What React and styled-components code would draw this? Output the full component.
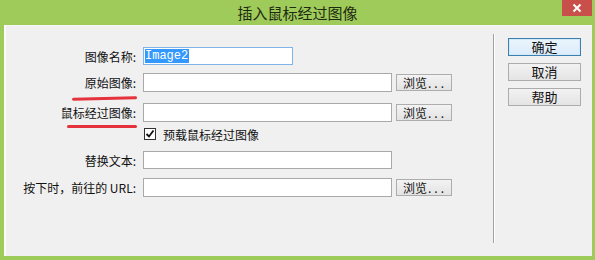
import React from "react";
import styled, { createGlobalStyle } from "styled-components";

const GlobalStyle = createGlobalStyle`
  html, body {
    margin: 0;
    padding: 0;
    background: #9fcb5b;
  }
  body {
    font-family: "Noto Sans CJK SC", "Liberation Sans", sans-serif;
    font-size: 12px;
    color: #111;
  }
`;

const Window = styled.div`
  width: 595px;
  height: 260px;
  background: #9fcb5b;
  display: flex;
  flex-direction: column;
  box-sizing: border-box;
`;

const TitleBar = styled.div`
  height: 25px;
  display: grid;
  grid-template-columns: 1fr auto 1fr;
  align-items: center;
`;

const Title = styled.div`
  grid-column: 2;
  font-size: 15px;
  color: #1e2a12;
  line-height: 25px;
`;

const CloseButton = styled.div`
  grid-column: 3;
  justify-self: end;
  align-self: start;
  width: 30px;
  height: 16px;
  margin-right: 3px;
  background: #c9504a;
  display: flex;
  align-items: center;
  justify-content: center;
`;

const Body = styled.div`
  flex: 1;
  margin: 0 3px 4px 4px;
  background: #f0f0f0;
  border-top: 1px solid #f7f7f7;
  border-left: 2px solid #fafafa;
  display: flex;
  box-sizing: border-box;
`;

const Form = styled.div`
  width: 446px;
  display: flex;
  flex-direction: column;
  padding-top: 21px;
`;

const Row = styled.div`
  display: flex;
  align-items: center;
  height: ${(p) => p.$h || 19}px;
  margin-top: ${(p) => p.$mt || 0}px;
`;

const Label = styled.div`
  position: relative;
  width: 130px;
  text-align: right;
  white-space: nowrap;
  line-height: 19px;
  &::after {
    content: "";
    display: ${(p) => (p.$mark ? "block" : "none")};
    position: absolute;
    right: -1px;
    bottom: ${(p) => p.$markBottom || -7}px;
    width: ${(p) => p.$mark || 0}px;
    height: 3px;
    border-radius: 2px;
    background: #e5333d;
    transform: rotate(${(p) => p.$tilt || 0}deg);
  }
`;

const Field = styled.div`
  box-sizing: border-box;
  width: ${(p) => p.$w || 249}px;
  height: 100%;
  margin-left: 7px;
  background: #fff;
  border: 1px solid ${(p) => (p.$focus ? "#7eb4ea" : "#a9a9a9")};
  display: flex;
  align-items: center;
  padding-left: 1px;
`;

const Selected = styled.span`
  font-family: "Liberation Mono", monospace;
  font-size: 12px;
  line-height: 14px;
  background: #3399ff;
  color: #fff;
  padding: 0 1px 0 0;
`;

const Browse = styled.div`
  box-sizing: border-box;
  width: 56px;
  height: 17px;
  margin-left: 4px;
  border: 1px solid #adadad;
  background: linear-gradient(#f3f3f3, #e3e3e3);
  font-size: 12px;
  line-height: 15px;
  padding-left: 6px;
  white-space: nowrap;
  span {
    letter-spacing: 3px;
    margin-left: 1px;
  }
`;

const CheckRow = styled.div`
  display: flex;
  align-items: center;
  height: 14px;
  margin-top: 5px;
  margin-left: 138px;
  gap: 7px;
`;

const CheckBox = styled.div`
  box-sizing: border-box;
  width: 12px;
  height: 12px;
  background: #fff;
  border: 1px solid #333;
  display: flex;
  align-items: center;
  justify-content: center;
`;

const Separator = styled.div`
  width: 0;
  margin: 8px 0 13px 41px;
  border-left: 1px solid #a0a0a0;
  border-right: 1px solid #fff;
`;

const Side = styled.div`
  display: flex;
  flex-direction: column;
  gap: 7px;
  padding-top: 12px;
  margin-left: 13px;
`;

const SideButton = styled.div`
  box-sizing: border-box;
  width: 73px;
  height: 18px;
  border: 1px solid ${(p) => (p.$default ? "#3c7fb1" : "#acacac")};
  background: ${(p) =>
    p.$default
      ? "linear-gradient(#eaf5fc, #dcecfc)"
      : "linear-gradient(#f2f2f2, #e4e4e4)"};
  box-shadow: ${(p) => (p.$default ? "inset 0 0 0 1px #d4e9f8" : "none")};
  font-size: 13px;
  line-height: 16px;
  text-align: center;
`;

function Check() {
  return (
    <CheckBox>
      <svg width="10" height="10" viewBox="0 0 10 10">
        <path d="M1.5 5 L4 7.5 L8.5 1.5" fill="none" stroke="#111" strokeWidth="1.8" />
      </svg>
    </CheckBox>
  );
}

function BrowseButton() {
  return (
    <Browse>
      浏览<span>...</span>
    </Browse>
  );
}

export default function App() {
  return (
    <>
      <GlobalStyle />
      <Window>
        <TitleBar>
          <Title>插入鼠标经过图像</Title>
          <CloseButton>
            <svg width="10" height="10" viewBox="0 0 10 10">
              <path d="M1.5 1.5 L8.5 8.5 M8.5 1.5 L1.5 8.5" stroke="#fff" strokeWidth="2" />
            </svg>
          </CloseButton>
        </TitleBar>
        <Body>
          <Form>
            <Row $h={18}>
              <Label>图像名称:</Label>
              <Field $w={150} $focus>
                <Selected>Image2</Selected>
              </Field>
            </Row>
            <Row $mt={8}>
              <Label $mark={65} $markBottom={-8} $tilt={-1.5}>原始图像:</Label>
              <Field />
              <BrowseButton />
            </Row>
            <Row $mt={11}>
              <Label $mark={70} $markBottom={-6}>鼠标经过图像:</Label>
              <Field />
              <BrowseButton />
            </Row>
            <CheckRow>
              <Check />
              <span>预载鼠标经过图像</span>
            </CheckRow>
            <Row $h={18} $mt={10}>
              <Label>替换文本:</Label>
              <Field />
            </Row>
            <Row $mt={9}>
              <Label>按下时，前往的 URL:</Label>
              <Field />
              <BrowseButton />
            </Row>
          </Form>
          <Separator />
          <Side>
            <SideButton $default>确定</SideButton>
            <SideButton>取消</SideButton>
            <SideButton>帮助</SideButton>
          </Side>
        </Body>
      </Window>
    </>
  );
}
